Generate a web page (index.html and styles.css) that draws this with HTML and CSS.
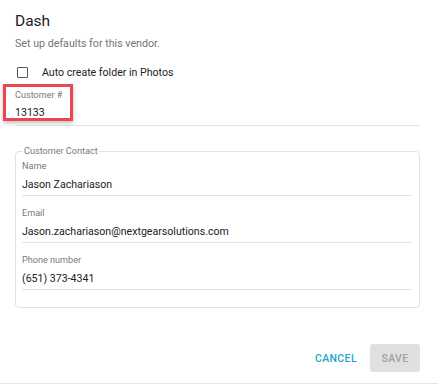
FILE: index.html
```html
<!DOCTYPE html>
<html lang="en">
<head>
    <meta charset="UTF-8">
    <meta name="viewport" content="width=device-width, initial-scale=1.0">
    <title>Dash - Vendor defaults</title>
    <link rel="stylesheet" href="styles.css">
</head>
<body>
    <div class="dialog">
        <h2 class="dialog-title">Dash</h2>
        <p class="dialog-subtitle">Set up defaults for this vendor.</p>

        <label class="check-row">
            <span class="check-box"></span>
            <span>Auto create folder in Photos</span>
        </label>

        <!-- Campo destacado -->
        <div class="field field-customer">
            <div class="field-label">Customer #</div>
            <div class="field-value">13133</div>
            <div class="highlight"></div>
        </div>

        <fieldset class="contact">
            <legend>Customer Contact</legend>
            <div class="field">
                <div class="field-label">Name</div>
                <div class="field-value">Jason Zachariason</div>
            </div>
            <div class="field">
                <div class="field-label">Email</div>
                <div class="field-value">Jason.zachariason@nextgearsolutions.com</div>
            </div>
            <div class="field">
                <div class="field-label">Phone number</div>
                <div class="field-value">(651) 373-4341</div>
            </div>
        </fieldset>

        <div class="actions">
            <button class="btn btn-cancel">Cancel</button>
            <button class="btn btn-save" disabled>Save</button>
        </div>
    </div>
</body>
</html>
```

FILE: styles.css
```css
* {
    margin: 0;
    padding: 0;
    box-sizing: border-box;
    font-family: 'Roboto', 'Liberation Sans', sans-serif;
}

body {
    width: 438px;
    height: 384px;
    background-color: #ffffff;
    overflow: hidden;
}

.dialog {
    height: 384px;
    padding: 11px 18px 0 15px;
    border-bottom: 1px solid #e6e6e6;
}

.dialog-title {
    font-size: 15.5px;
    font-weight: 400;
    line-height: 20px;
    color: #212121;
}

.dialog-subtitle {
    margin-top: 5px;
    font-size: 10.7px;
    line-height: 16px;
    color: #757575;
}

.check-row {
    display: flex;
    align-items: center;
    gap: 14px;
    height: 20px;
    margin-top: 10px;
    padding-left: 2px;
    font-size: 10.6px;
    color: #212121;
}

.check-box {
    width: 11px;
    height: 11px;
    border: 1.5px solid #555555;
    border-radius: 1px;
}

.field {
    margin-top: 10px;
    padding-bottom: 1px;
    border-bottom: 1px solid #e4e4e4;
}

.field-label {
    font-size: 9.1px;
    line-height: 14px;
    color: #7a7a7a;
}

.field-value {
    margin-top: 3px;
    font-size: 10.6px;
    line-height: 18px;
    color: #212121;
}

.field-customer {
    position: relative;
    margin-top: 6px;
    padding-bottom: 3px;
}

.field-customer .field-value {
    margin-top: 2px;
}

/* Recuadro rojo de la captura */
.highlight {
    position: absolute;
    left: -12px;
    top: -4px;
    width: 70px;
    height: 37px;
    border: 3px solid #ef4452;
    box-shadow: 0 2px 4px rgba(0, 0, 0, 0.25);
}

.contact {
    margin-top: 19px;
    padding: 0 7px 17px 6px;
    border: 1px solid #e2e2e2;
    border-radius: 4px;
}

.contact legend {
    margin-left: 1px;
    padding: 0 1px;
    font-size: 9.1px;
    line-height: 12px;
    color: #7a7a7a;
}

.contact .field:first-of-type {
    margin-top: 2px;
}

.actions {
    display: flex;
    justify-content: flex-end;
    align-items: center;
    gap: 13px;
    margin-top: 36px;
}

.btn {
    border: none;
    background: transparent;
    font-size: 10.5px;
    font-weight: 500;
    letter-spacing: 0.4px;
    text-transform: uppercase;
    cursor: pointer;
}

.btn-cancel {
    color: #1da6cc;
}

.btn-save {
    width: 50px;
    height: 28px;
    border-radius: 3px;
    background-color: #e0e0e0;
    color: #a2a2a2;
}
```
